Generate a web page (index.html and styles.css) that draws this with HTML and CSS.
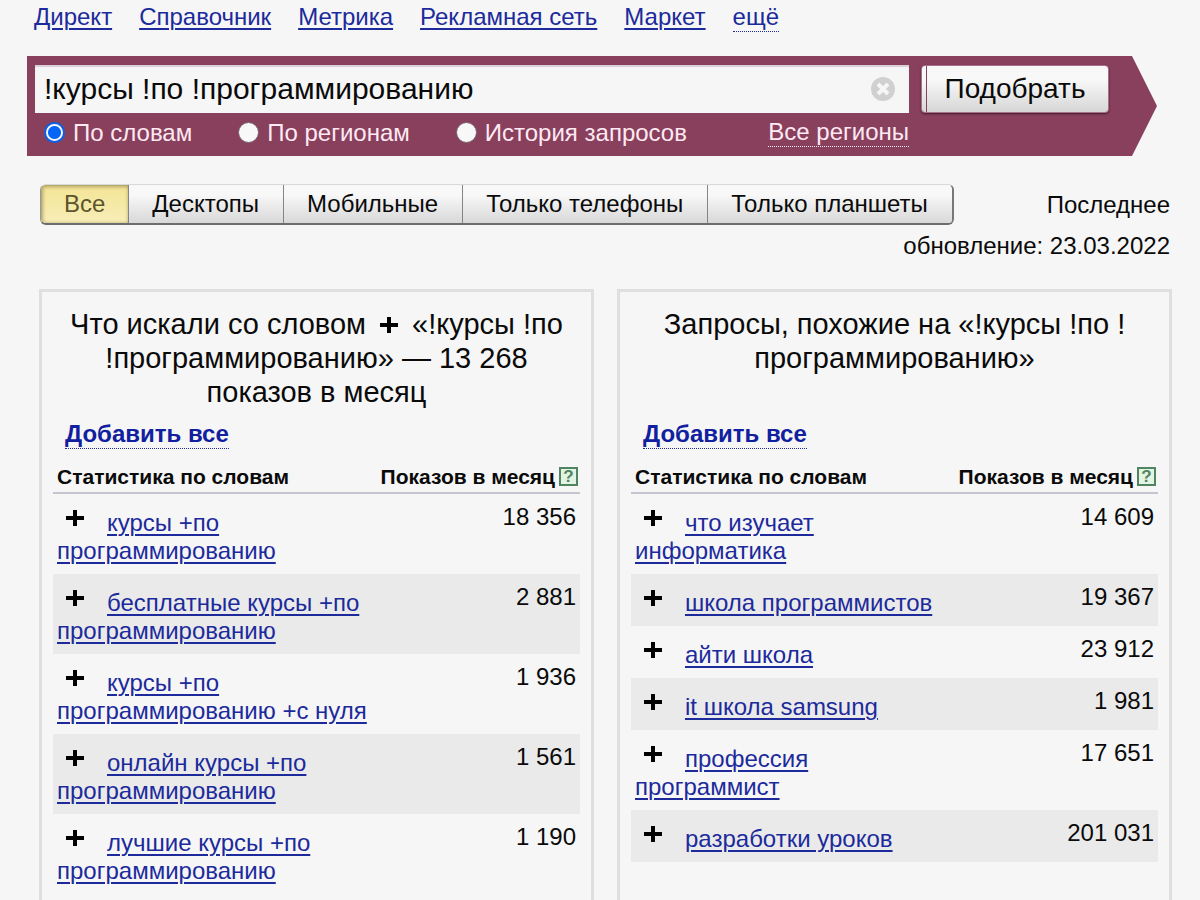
FILE: index.html
```html
<!DOCTYPE html>
<html lang="ru">
<head>
<meta charset="utf-8">
<meta name="viewport" content="width=device-width, initial-scale=1">
<title>Подбор слов</title>
<link rel="stylesheet" href="styles.css">
</head>
<body>
<svg class="sprite" aria-hidden="true">
  <symbol id="plus" viewBox="0 0 18 18"><path d="M9 1v16M0 9h18" stroke="#000" stroke-width="4" fill="none"/></symbol>
</svg>
<div class="page">
  <nav class="services">
    <a href="#">Директ</a>
    <a href="#">Справочник</a>
    <a href="#">Метрика</a>
    <a href="#">Рекламная сеть</a>
    <a href="#">Маркет</a>
    <a href="#" class="more">ещё</a>
  </nav>

  <form class="search">
    <div class="search-main">
      <div class="query">
        <input type="text" class="query-input" aria-label="Запрос" value="!курсы !по !программированию">
        <button type="button" class="clear" aria-label="Очистить">
          <svg viewBox="0 0 24 24" width="24" height="24"><circle cx="12" cy="12" r="12" fill="#d0d0d0"/><path d="M7 7l10 10M17 7L7 17" stroke="#f6f6f6" stroke-width="4"/></svg>
        </button>
      </div>
      <div class="modes">
        <label class="mode"><input type="radio" name="mode" checked>По словам</label>
        <label class="mode"><input type="radio" name="mode">По регионам</label>
        <label class="mode"><input type="radio" name="mode">История запросов</label>
        <a href="#" class="regions">Все регионы</a>
      </div>
    </div>
    <button type="button" class="submit">Подобрать</button>
  </form>

  <div class="toolbar">
    <div class="tabs">
      <button type="button" class="tab active">Все</button>
      <button type="button" class="tab">Десктопы</button>
      <button type="button" class="tab">Мобильные</button>
      <button type="button" class="tab">Только телефоны</button>
      <button type="button" class="tab">Только планшеты</button>
    </div>
    <p class="updated">Последнее обновление: 23.03.2022</p>
  </div>

  <main class="panels">
    <section class="panel">
      <h2 class="title">Что искали со словом <svg class="plus"><use href="#plus"/></svg> «!курсы !по !программированию» — 13&nbsp;268 показов в месяц</h2>
      <div><a href="#" class="add-all">Добавить все</a></div>
      <table class="stats">
        <thead><tr><th>Статистика по словам</th><th class="count">Показов в месяц<span class="help">?</span></th></tr></thead>
        <tbody>
          <tr><td><svg class="plus"><use href="#plus"/></svg><a href="#">курсы +по программированию</a></td><td class="count">18 356</td></tr>
          <tr><td><svg class="plus"><use href="#plus"/></svg><a href="#">бесплатные курсы +по программированию</a></td><td class="count">2 881</td></tr>
          <tr><td><svg class="plus"><use href="#plus"/></svg><a href="#">курсы +по программированию +с нуля</a></td><td class="count">1 936</td></tr>
          <tr><td><svg class="plus"><use href="#plus"/></svg><a href="#">онлайн курсы +по программированию</a></td><td class="count">1 561</td></tr>
          <tr><td><svg class="plus"><use href="#plus"/></svg><a href="#">лучшие курсы +по программированию</a></td><td class="count">1 190</td></tr>
        </tbody>
      </table>
    </section>
    <section class="panel">
      <h2 class="title">Запросы, похожие на «!курсы !по !<wbr>программированию»</h2>
      <div><a href="#" class="add-all">Добавить все</a></div>
      <table class="stats">
        <thead><tr><th>Статистика по словам</th><th class="count">Показов в месяц<span class="help">?</span></th></tr></thead>
        <tbody>
          <tr><td><svg class="plus"><use href="#plus"/></svg><a href="#">что изучает информатика</a></td><td class="count">14 609</td></tr>
          <tr><td><svg class="plus"><use href="#plus"/></svg><a href="#">школа программистов</a></td><td class="count">19 367</td></tr>
          <tr><td><svg class="plus"><use href="#plus"/></svg><a href="#">айти школа</a></td><td class="count">23 912</td></tr>
          <tr><td><svg class="plus"><use href="#plus"/></svg><a href="#">it школа samsung</a></td><td class="count">1 981</td></tr>
          <tr><td><svg class="plus"><use href="#plus"/></svg><a href="#">профессия программист</a></td><td class="count">17 651</td></tr>
          <tr><td><svg class="plus"><use href="#plus"/></svg><a href="#">разработки уроков</a></td><td class="count">201 031</td></tr>
        </tbody>
      </table>
    </section>
  </main>
</div>
</body>
</html>
```

FILE: styles.css
```css
* { box-sizing: border-box; }

body {
  margin: 0;
  background: #f6f6f6;
  color: #0a0a0a;
  font: 24px/28px "Liberation Sans", Arial, sans-serif;
}

button, input { font: inherit; color: inherit; }

a { color: #1c2a9c; text-decoration-thickness: 2px; text-underline-offset: 3px; }

.sprite { position: absolute; width: 0; height: 0; }

.page {
  display: flex;
  flex-direction: column;
  min-height: 100vh;
  padding: 3px 28px 0 27px;
}

.services { display: flex; gap: 27px; padding-left: 7px; }
.services a { white-space: nowrap; }
.services .more, .add-all { text-decoration: none; border-bottom: 1px dotted #1c2a9c; }

.search {
  display: flex;
  align-items: flex-start;
  gap: 12px;
  height: 100px;
  margin: 24px 15px 0 0;
  padding: 9px 48px 0 8px;
  background: #88405d;
  clip-path: polygon(0 0, calc(100% - 25px) 0, 100% 50%, calc(100% - 25px) 100%, 0 100%);
}
.search-main { flex: 1; }
.query {
  display: flex;
  align-items: center;
  height: 48px;
  padding: 0 14px 0 9px;
  background: #f6f6f6;
  box-shadow: inset 0 2px 1px #d9d0d5;
}
.query-input {
  flex: 1;
  min-width: 0;
  padding: 0;
  border: 0;
  outline: 0;
  background: none;
  font-size: 30px;
}
.clear { padding: 0; border: 0; background: none; height: 24px; }
.clear svg { display: block; }

.modes { display: flex; align-items: center; margin-top: 5px; padding-left: 9px; color: #ffe9f3; }
.mode { display: flex; align-items: center; gap: 8px; margin-right: 46px; white-space: nowrap; }
.mode input {
  appearance: none;
  width: 21px;
  height: 21px;
  margin: 0;
  border: 1px solid #76616c;
  border-radius: 50%;
  background: #f8f8f8;
}
.mode input:checked {
  border: 2px solid #0b5fe8;
  background: radial-gradient(circle, #0566f5 6px, #f8f8f8 7px);
}
.regions { margin-left: auto; color: inherit; text-decoration: none; border-bottom: 1px dotted #ffe9f3; white-space: nowrap; }

.submit {
  width: 188px;
  height: 48px;
  padding: 0;
  border: 1px solid #a96f88;
  border-radius: 4px;
  background: linear-gradient(90deg, transparent 4px, #88405d 4px, #88405d 5px, transparent 5px), linear-gradient(#f8f8f8 30%, #d6d6d6);
  box-shadow: 0 1px 2px #3f1c2b;
  font-size: 28px;
}

.toolbar { display: flow-root; margin-top: 28px; padding: 0 2px 0 13px; }
.tabs {
  display: flex;
  float: left;
  height: 41px;
  border: 1px solid;
  border-color: #d9d9d9 #777 #6d6d6d #999;
  border-width: 1px 2px 2px 1px;
  border-radius: 6px;
  overflow: hidden;
}
.tab {
  padding: 0 24px 0 23px;
  border: 0;
  border-left: 1px solid #858585;
  background: linear-gradient(#f8f8f8 25%, #d8d8d8);
  white-space: nowrap;
}
.tab.active {
  padding: 0 23px;
  border-left: 0;
  color: #5c552c;
  background: linear-gradient(#f3e494, #f8eeb8);
  box-shadow: inset 1px 1px 4px #8f854f;
}
.updated { margin: 0; line-height: 41px; text-align: right; }

.panels {
  flex: 1;
  display: grid;
  grid-template-columns: 1fr 1fr;
  gap: 23px;
  margin-top: 23px;
  padding-left: 12px;
}
.panel { border: 3px solid #dfdfdf; border-bottom: 0; padding: 15px 11px 0; }
.title { min-height: 102px; margin: 0 0 11px; padding: 0 16px; font-size: 29px; font-weight: 400; line-height: 34px; text-align: center; }
.add-all { display: inline-block; margin-left: 12px; color: #10209f; font-weight: 700; white-space: nowrap; }

.plus { width: 18px; height: 18px; margin: 0 23px 0 9px; vertical-align: 4px; }
.title .plus { margin: 0 6px; vertical-align: 0; }

.stats { width: 100%; margin-top: 12px; border-collapse: collapse; }
.stats th { height: 32px; padding: 0 0 0 4px; border-bottom: 2px solid #c5c5cf; font-size: 21px; line-height: 30px; text-align: left; white-space: nowrap; }
.stats td { padding: 15px 0 9px 4px; vertical-align: top; line-height: 28px; }
.stats td.count { padding: 9px 4px 9px 0; text-align: right; white-space: nowrap; }
.stats th.count { padding: 0 2px 0 0; text-align: right; }
.stats tbody tr:nth-child(even) { background: #eaeaea; }
.help {
  display: inline-block;
  width: 19px;
  height: 19px;
  margin-left: 4px;
  border: 2px solid #4f8560;
  background: #e3f3e4;
  color: #4f8560;
  font-size: 17px;
  line-height: 15px;
  text-align: center;
  vertical-align: 2px;
}
```
